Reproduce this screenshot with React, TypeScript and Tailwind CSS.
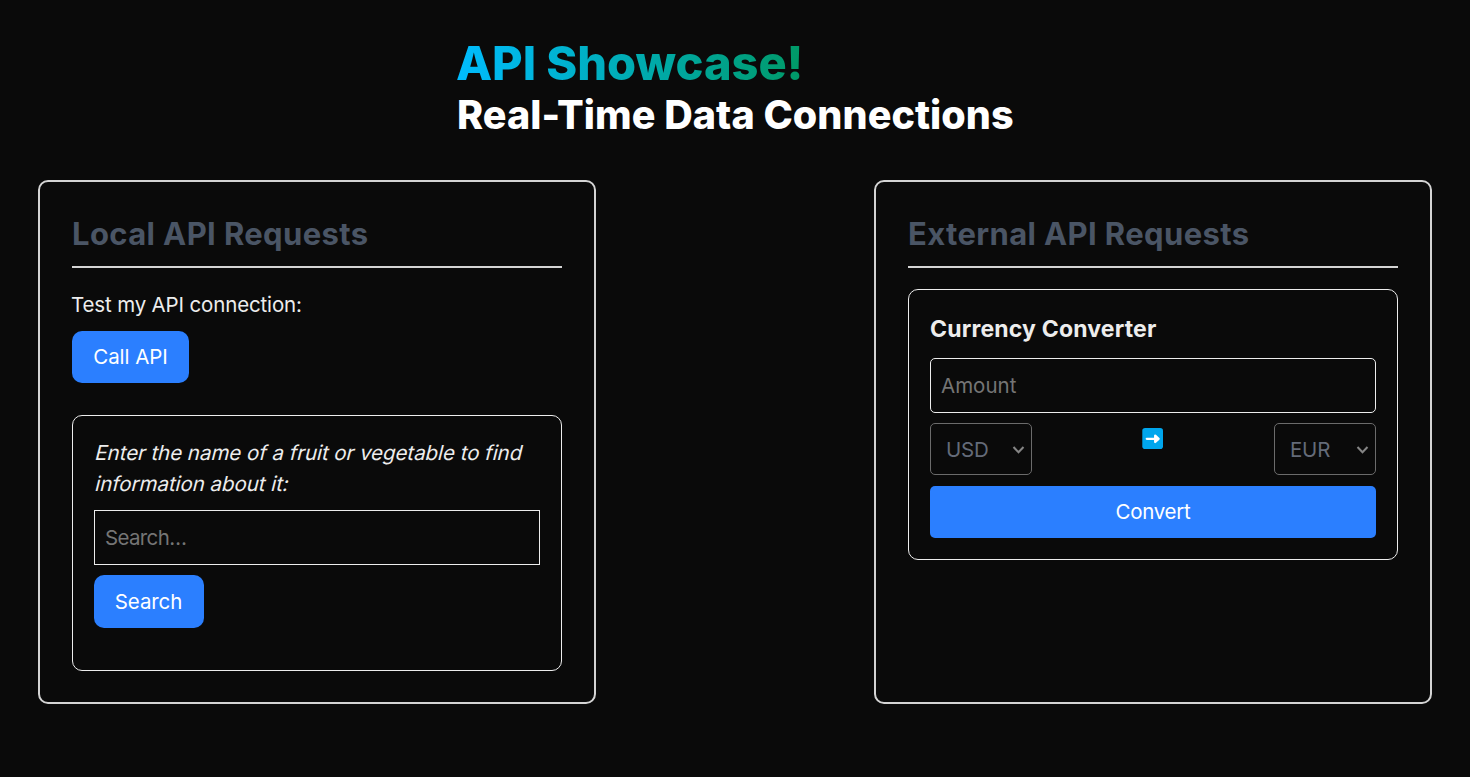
import { ReactNode } from "react";

function Panel({ title, children }: { title: ReactNode; children: ReactNode }) {
  return (
    <section className="h-[524px] w-[558px] rounded-[10px] border-2 border-[#d4d4d4] px-8 pt-8">
      <h2 className="mb-[21px] h-[54px] border-b-2 border-[#d4d4d4] text-[31px] leading-[39px] font-bold tracking-[0.38px] whitespace-nowrap text-[#4a5565]">
        {title}
      </h2>
      {children}
    </section>
  );
}

function CurrencySelect({ value }: { value: string }) {
  return (
    <div className="flex h-[52px] w-[102px] items-center justify-between rounded-[5px] border border-[#6b6b6b] pr-[6px] pl-[15px] text-[#646b79]">
      <span className="text-[20.5px] tracking-[-0.2px]">{value}</span>
      <svg width="13" height="9" viewBox="0 0 13 9" fill="none" stroke="#858585" strokeWidth="2">
        <path d="M1.5 2 6.5 7.3 11.5 2" />
      </svg>
    </div>
  );
}

export default function App() {
  return (
    <main className="flex h-[777px] w-[1470px] flex-col items-center bg-[#0a0a0a] pt-[38px] font-['Inter',sans-serif] text-[20.5px] leading-[31px] text-[#ededed]">
      <header className="h-[142px] w-[556px] font-extrabold whitespace-nowrap">
        <h1 className="-ml-px w-fit bg-linear-to-r from-[#00bcff] to-[#009966] bg-clip-text text-[47px] leading-[50px] tracking-[-0.05px] text-transparent">
          API Showcase!
        </h1>
        <p className="text-[39.5px] leading-[54px] tracking-[0.05px] text-white">
          Real-Time Data Connections
        </p>
      </header>
      <div className="flex w-[1394px] justify-between">
        <Panel title="Local API Requests">
          <p className="mb-[11px] -ml-px tracking-[-0.15px]">Test my API connection:</p>
          <button className="mb-8 block h-[52px] w-[117px] rounded-[10px] bg-[#2b7fff] pb-[2px] tracking-[-0.05px] text-white">
            Call API
          </button>
          <div className="h-[256px] rounded-[10px] border border-[#ededed] px-[21px] pt-[21px]">
            <p className="mb-[11px] tracking-[-0.04px] whitespace-nowrap">
              <em className="block w-fit origin-[0_75%] skew-x-[-14deg] not-italic">
                Enter the name of a fruit or vegetable to find
              </em>
              <em className="block w-fit origin-[0_75%] skew-x-[-14deg] not-italic">
                information about it:
              </em>
            </p>
            <input
              className="block h-[55px] w-full border border-[#ededed] px-[10px] tracking-[-0.65px] placeholder:text-[#757575]"
              placeholder="Search…"
            />
            <button className="mt-[10px] block h-[53px] w-[110px] rounded-[10px] bg-[#2b7fff] pr-px tracking-[-0.1px] text-white">
              Search
            </button>
          </div>
        </Panel>
        <Panel title="External API Requests">
          <div className="h-[271px] rounded-[10px] border border-[#ededed] px-[21px] pt-[21px]">
            <h3 className="mb-[10px] h-[37px] text-[23px] leading-[37px] font-bold tracking-[0.18px]">
              Currency Converter
            </h3>
            <input
              className="block h-[55px] w-full rounded-[5px] border border-[#ededed] px-[10px] tracking-[0px] placeholder:text-[#757575]"
              placeholder="Amount"
            />
            <div className="mt-[10px] flex items-start justify-between">
              <CurrencySelect value="USD" />
              <svg className="mt-[5px] mr-px" width="21" height="21" viewBox="0 0 21 21">
                <rect x="0.3" width="20.7" height="21" rx="2.8" fill="#00a6ed" />
                <path
                  d="M4.8 10.8h9.6M13.2 7.6l3.4 3.2-3.4 3.2z"
                  fill="#fff"
                  stroke="#fff"
                  strokeWidth="2.3"
                  strokeLinecap="round"
                  strokeLinejoin="round"
                />
              </svg>
              <CurrencySelect value="EUR" />
            </div>
            <button className="mt-[11px] block h-[52px] w-full rounded-[5px] bg-[#2b7fff] pb-[2px] tracking-[-0.25px] text-white">
              Convert
            </button>
          </div>
        </Panel>
      </div>
    </main>
  );
}
